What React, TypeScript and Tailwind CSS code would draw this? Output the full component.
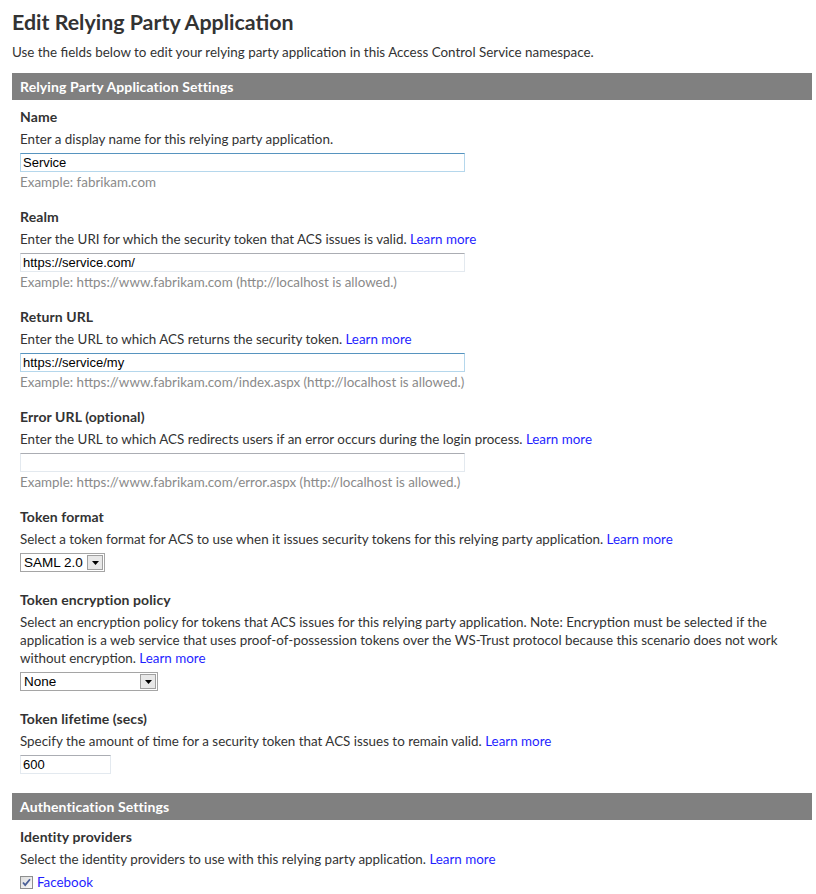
const Learn = () => <a className="text-[#1f1fff] cursor-pointer">Learn more</a>;

const TextBox = ({ value = "", focused = false, w = "w-[445px]" }: { value?: string; focused?: boolean; w?: string }) => (
  <div
    className={`${w} h-[19px] border px-[2px] flex items-center font-['Liberation_Sans',Arial,sans-serif] text-[13px] text-black ${
      focused
        ? "border-[#b5d7ec] border-t-[#5794bf]"
        : "border-[#e3e9ef] border-t-[#abadb3]"
    }`}
  >
    {value}
  </div>
);

const Select = ({ value, w }: { value: string; w: string }) => (
  <div className={`${w} h-[19px] border border-[#a5a5a5] flex items-stretch font-['Liberation_Sans',Arial,sans-serif] text-[13.5px] text-black`}>
    <span className="flex-1 flex items-center pl-[3px] leading-none whitespace-nowrap overflow-hidden">{value}</span>
    <span className="w-[16px] m-[1px] border border-[#a0a0a0] bg-[#e8e8e8] flex items-center justify-center">
      <svg width="7" height="4" viewBox="0 0 7 4">
        <path d="M0 0h7L3.5 4z" fill="#000" />
      </svg>
    </span>
  </div>
);

const Field = ({ label, children }: { label: string; children: React.ReactNode }) => (
  <div className="flex flex-col">
    <div className="font-bold text-[14px] tracking-[0.1px] leading-[18px]">{label}</div>
    {children}
  </div>
);

const Desc = ({ children }: { children: React.ReactNode }) => <div className="leading-[18px] mt-[4px] mb-[5px]">{children}</div>;
const Example = ({ children }: { children: React.ReactNode }) => <div className="leading-[18px] mt-[1px] text-[#8a8a8a]">{children}</div>;

const Bar = ({ title }: { title: string }) => (
  <div className="h-[27px] bg-[#808080] text-white font-bold text-[14px] tracking-[0.1px] flex items-center px-2">{title}</div>
);

export default function App() {
  return (
    <div className="w-[816px] h-[894px] overflow-hidden bg-white pl-3 pr-1 font-['Lato','Noto_Sans',sans-serif] text-[13.4px] text-[#333]">
      <h1 className="pt-[9px] text-[21.4px] font-bold leading-[26px]">Edit Relying Party Application</h1>
      <p className="mt-[8px] leading-[18px]">
        Use the fields below to edit your relying party application in this Access Control Service namespace.
      </p>
      <div className="mt-[12px]">
        <Bar title="Relying Party Application Settings" />
      </div>
      <div className="px-2 pt-[8px] flex flex-col gap-[17px]">
        <Field label="Name">
          <Desc>Enter a display name for this relying party application.</Desc>
          <TextBox value="Service" focused />
          <Example>Example: fabrikam.com</Example>
        </Field>
        <Field label="Realm">
          <Desc>
            Enter the URI for which the security token that ACS issues is valid. <Learn />
          </Desc>
          <TextBox value="https://service.com/" />
          <Example>Example: https://www.fabrikam.com (http://localhost is allowed.)</Example>
        </Field>
        <Field label="Return URL">
          <Desc>
            Enter the URL to which ACS returns the security token. <Learn />
          </Desc>
          <TextBox value="https://service/my" focused />
          <Example>Example: https://www.fabrikam.com/index.aspx (http://localhost is allowed.)</Example>
        </Field>
        <Field label="Error URL (optional)">
          <Desc>
            Enter the URL to which ACS redirects users if an error occurs during the login process. <Learn />
          </Desc>
          <TextBox />
          <Example>Example: https://www.fabrikam.com/error.aspx (http://localhost is allowed.)</Example>
        </Field>
        <Field label="Token format">
          <Desc>
            Select a token format for ACS to use when it issues security tokens for this relying party application. <Learn />
          </Desc>
          <Select value="SAML 2.0" w="w-[85px]" />
        </Field>
        <div className="pt-[2px]">
          <Field label="Token encryption policy">
            <Desc>
              Select an encryption policy for tokens that ACS issues for this relying party application. Note: Encryption
              must be selected if the application is a web service that uses proof-of-possession tokens over the WS-Trust
              protocol because this scenario does not work without encryption. <Learn />
            </Desc>
            <Select value="None" w="w-[138px]" />
          </Field>
        </div>
        <div className="pt-[2px]">
          <Field label="Token lifetime (secs)">
            <Desc>
              Specify the amount of time for a security token that ACS issues to remain valid. <Learn />
            </Desc>
            <TextBox value="600" w="w-[91px]" />
          </Field>
        </div>
      </div>
      <div className="mt-[19px]">
        <Bar title="Authentication Settings" />
      </div>
      <div className="px-2 pt-[8px]">
        <Field label="Identity providers">
          <Desc>
            Select the identity providers to use with this relying party application. <Learn />
          </Desc>
          <label className="flex items-center gap-[4px] leading-[18px]">
            <span className="w-[13px] h-[13px] border border-[#8e8f8f] bg-gradient-to-br from-[#dcdcdc] to-[#fafafa] flex items-center justify-center">
              <svg width="9" height="9" viewBox="0 0 9 9">
                <path d="M1 4.5l2.2 2.5L8 1.2" stroke="#4a5f97" strokeWidth="1.8" fill="none" />
              </svg>
            </span>
            <span className="text-[#1f1fff]">Facebook</span>
          </label>
        </Field>
      </div>
    </div>
  );
}
